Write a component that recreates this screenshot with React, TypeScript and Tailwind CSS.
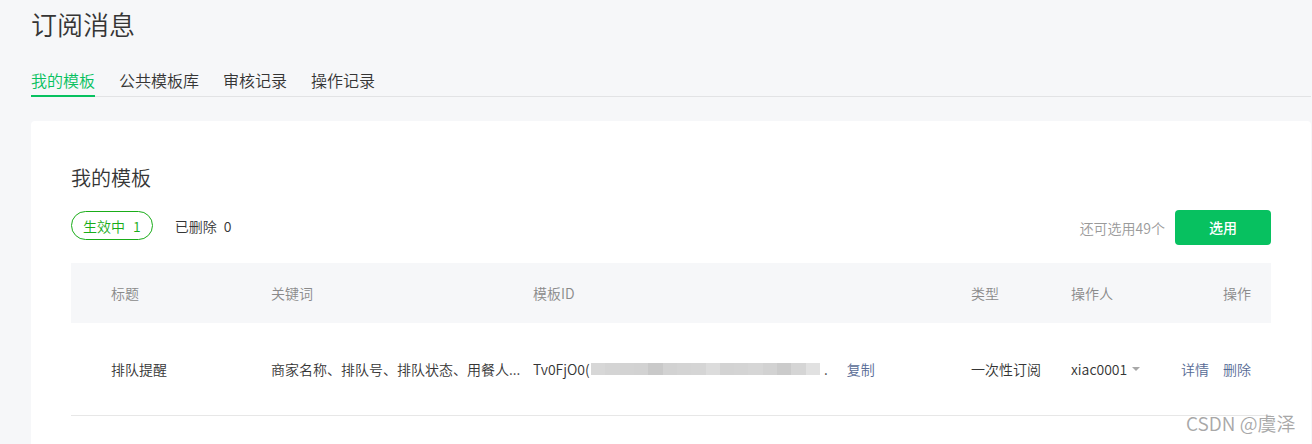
const blurBlocks = [
  'bg-[#d7d7d7]',
  'bg-[#d4d4d4]',
  'bg-[#d3d3d3]',
  'bg-[#d2d2d2]',
  'bg-[#c9c9c9]',
  'bg-[#d2d2d2]',
  'bg-[#d4d4d4]',
  'bg-[#d5d5d5]',
  'bg-[#dcdcdc]',
  'bg-[#d3d3d3]',
  'bg-[#d4d4d4]',
  'bg-[#d6d6d6]',
  'bg-[#d2d2d2]',
  'bg-[#cbcbcb]',
  'bg-[#d5d5d5]',
  'bg-[#e1e1e1]',
];

export default function App() {
  return (
    <div className="relative min-h-screen bg-[#f6f7f9] pl-[31px] pr-[1px] pt-[6px] font-['Noto_Sans_CJK_SC',sans-serif] font-[350] text-[#353535]">
      <h1 className="text-[26px] leading-[36px] font-[350] text-[#353535]">订阅消息</h1>

      <div className="mt-[26px] flex items-end gap-[24px] border-b border-[#e2e3e5] text-[16px] leading-[24px]">
        <div className="-mb-[1px] border-b-2 border-[#07c160] pb-[3px] text-[#07c160]">我的模板</div>
        <div className="pb-[4px] text-[#353535]">公共模板库</div>
        <div className="pb-[4px] text-[#353535]">审核记录</div>
        <div className="pb-[4px] text-[#353535]">操作记录</div>
      </div>

      <div className="mt-[24px] rounded-[4px] bg-white px-[40px] pt-[43px] pb-[40px]">
        <h2 className="text-[20px] leading-[28px] font-[350] text-[#353535]">我的模板</h2>

        <div className="mt-[18px] flex h-[35px] items-start justify-between text-[14px]">
          <div className="flex items-start">
            <div className="mt-[1px] flex h-[29px] items-center gap-[8px] rounded-full border border-[#1aad19] px-[11px] leading-[20px] text-[#1aad19]">
              <span>生效中</span>
              <span>1</span>
            </div>
            <div className="ml-[22px] mt-[1px] flex h-[29px] items-center gap-[7px] leading-[20px] text-[#353535]">
              <span>已删除</span>
              <span>0</span>
            </div>
          </div>
          <div className="flex items-center">
            <span className="mr-[10px] leading-[20px] text-[#9a9a9a]">还可选用49个</span>
            <button className="flex h-[35px] w-[96px] items-center justify-center rounded-[4px] bg-[#07c160] text-[14px] font-medium text-white">
              选用
            </button>
          </div>
        </div>

        <div className="mt-[18px] text-[14px] leading-[20px]">
          <div className="grid h-[60px] grid-cols-[160px_262px_438px_100px_100px_80px] items-center bg-[#f6f7f9] pl-[40px] pr-[20px] text-[#8a8a8a]">
            <div>标题</div>
            <div>关键词</div>
            <div>模板ID</div>
            <div>类型</div>
            <div>操作人</div>
            <div className="text-right">操作</div>
          </div>
          <div className="grid h-[93px] grid-cols-[160px_262px_438px_100px_100px_80px] items-center border-b border-[#e7e7e7] pl-[40px] pr-[20px] pb-[1px] text-[#353535]">
            <div>排队提醒</div>
            <div className="whitespace-nowrap">商家名称、排队号、排队状态、用餐人...</div>
            <div className="flex items-center whitespace-nowrap">
              <span className="inline-block w-[58px] overflow-hidden">Tv0FjO0(</span>
              <span className="flex h-[12px] w-[229px]">
                {blurBlocks.map((c, i) => (
                  <span key={i} className={`h-full flex-1 ${c}`} />
                ))}
              </span>
              <span className="ml-[4px]">.</span>
              <span className="ml-[19px] text-[#576b95]">复制</span>
            </div>
            <div>一次性订阅</div>
            <div className="flex items-center whitespace-nowrap">
              <span>xiac0001</span>
              <svg className="ml-[5px]" width="8" height="4" viewBox="0 0 8 4">
                <path d="M0 0 L8 0 L4 4 Z" fill="#a8a8a8" />
              </svg>
            </div>
            <div className="flex justify-end gap-[14px] whitespace-nowrap text-[#576b95]">
              <span>详情</span>
              <span>删除</span>
            </div>
          </div>
        </div>
      </div>

      <div className="absolute left-[1186px] top-[410px] text-[19px] leading-[26px] text-[#a8a8a8]">
        CSDN @虞泽
      </div>
    </div>
  );
}
